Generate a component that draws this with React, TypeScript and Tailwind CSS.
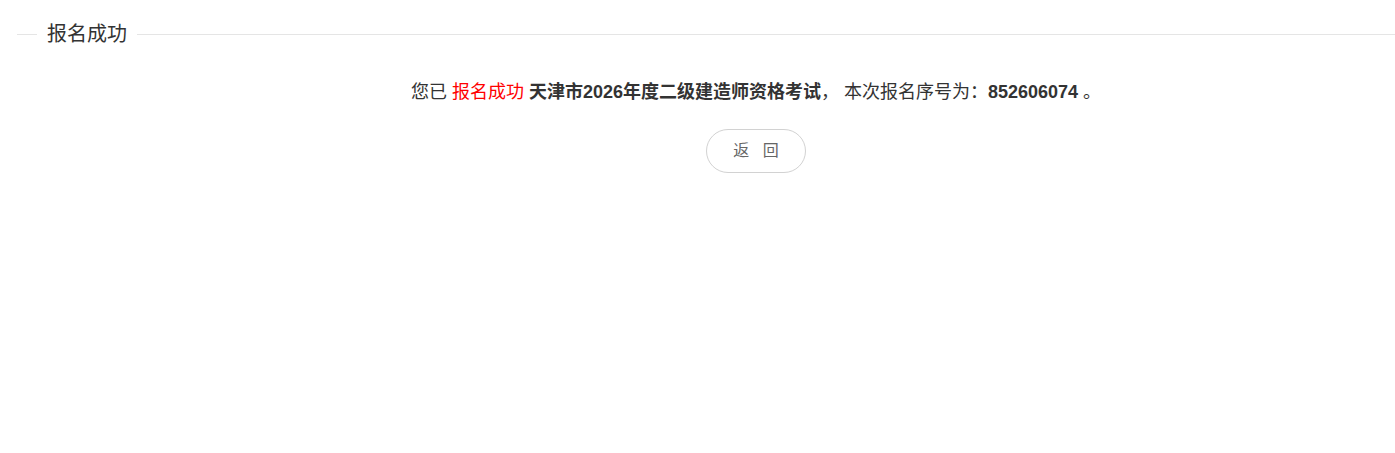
export default function App() {
  return (
    <div className="min-h-screen bg-white font-['Liberation_Sans','Noto_Sans_CJK_SC',sans-serif] text-[#333]">
      <fieldset className="ml-[17px] mt-[20px] border-0 border-t border-[#e5e5e5]">
        <legend className="ml-[20px] px-[10px] text-[20px] leading-[28px] text-[#333]">报名成功</legend>
        <div className="pl-[100px] pt-[31px] text-center">
          <p className="text-[18px] leading-[26px]">
            您已 <span className="text-[#f00]">报名成功</span>{' '}
            <b className="font-bold">天津市2026年度二级建造师资格考试</b>， 本次报名序号为：
            <b className="font-bold">852606074</b> 。
          </p>
          <button className="mt-[24px] h-[44px] w-[100px] rounded-full border border-[#d2d2d2] bg-white text-[16px] text-[#666]">
            返&nbsp;&nbsp;&nbsp;回
          </button>
        </div>
      </fieldset>
    </div>
  );
}
